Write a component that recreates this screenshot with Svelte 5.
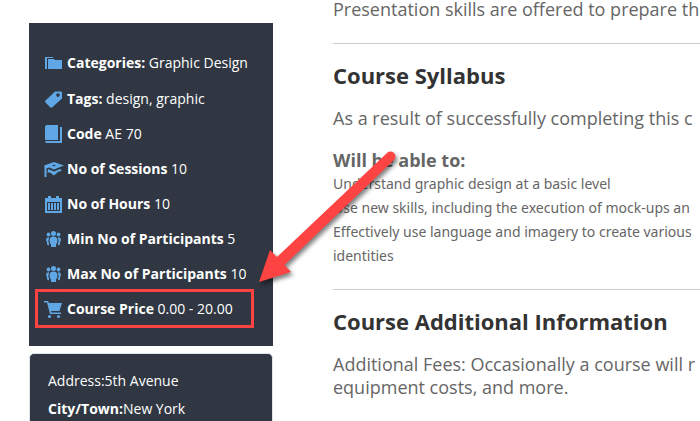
<script>
  const details = [
    { icon: 'folder', label: 'Categories:', value: 'Graphic Design' },
    { icon: 'tag', label: 'Tags:', value: 'design, graphic' },
    { icon: 'book', label: 'Code', value: 'AE 70' },
    { icon: 'cap', label: 'No of Sessions', value: '10' },
    { icon: 'calendar', label: 'No of Hours', value: '10' },
    { icon: 'people', label: 'Min No of Participants', value: '5' },
    { icon: 'people', label: 'Max No of Participants', value: '10' },
    { icon: 'cart', label: 'Course Price', value: '0.00 - 20.00', marked: true }
  ];
  const skills = [
    'Understand graphic design at a basic level',
    'Use new skills, including the execution of mock-ups an',
    'Effectively use language and imagery to create various',
    'identities'
  ];
</script>

{#snippet glyph(name)}
  <svg class="icon" viewBox="0 0 20 20" aria-hidden="true">
    {#if name === 'folder'}
      <path d="M1 4h8v1H3v11H1z M4 6h6l1 1h7v9H4z" />
    {:else if name === 'tag'}
      <path fill-rule="evenodd" d="M11 2.500h6q1 0 1 1v6L8 18.500Q7 19 6 18L1.500 13.500Q.5 12.500 1.500 11.500zM14 4.300a1.800 1.800 0 1 0 0 3.600 1.800 1.800 0 0 0 0-3.600z" />
    {:else if name === 'book'}
      <path d="M3 1h11v15H1V3q0-2 2-2z" />
      <path d="M16 3h2v16H3q-2 0-2-2h15z" />
    {:else if name === 'cap'}
      <path fill-rule="evenodd" d="M0 6.500 10 3l10 3.500-10 4-5-2-2.500 1V18H.5V8zM10 5.700l-2 .8 2 .8 2-.8z" />
      <path d="m4 10 6 2.600 6-2.600 2 1.500-4 1.500-4 3.500-4-3H3.500z" />
    {:else if name === 'calendar'}
      <path fill-rule="evenodd" d="M1 4h17v15H1zM3 8v9h13V8z" />
      <path d="M4 2h3v4H4zM12 2h3v4h-3zM4 9h2v7H4zM7 9h2v7H7zM10 9h2v7h-2zM13 9h2v7h-2z" />
    {:else if name === 'people'}
      <circle cx="9.500" cy="4.500" r="2.500" />
      <circle cx="4.500" cy="5.500" r="1.900" />
      <circle cx="14.500" cy="5.500" r="1.900" />
      <path d="M9.500 7.500q4 0 4 4 0 3-1.500 4v2.500H7v-2.500q-1.500-1-1.500-4 0-4 4-4zM5.200 8.500q-1.500 3-.2 6v2l-2-1v-2Q.5 9 4.500 8.300zM13.800 8.500q1.500 3 .2 6v2l2-1v-2q2.500-4.500-1.500-5.200z" />
    {:else}
      <path d="M0 2h4l1 2h13l-2.500 8H7l.4 1.500H17V15H6L3 3.500H0z" />
      <circle cx="5.500" cy="17.500" r="1.600" />
      <circle cx="14.500" cy="17.500" r="1.600" />
    {/if}
  </svg>
{/snippet}

<div class="page">
  <aside>
    <ul class="details">
      {#each details as item}
        <li class:marked={item.marked}>
          {@render glyph(item.icon)}
          <span><strong>{item.label}</strong> {item.value}</span>
        </li>
      {/each}
    </ul>
    <div class="address">
      <p><span>Address:</span><span>5th Avenue</span></p>
      <p><strong>City/Town:</strong><span>New York</span></p>
    </div>
  </aside>

  <main>
    <section>
      <p>Presentation skills are offered to prepare th</p>
    </section>
    <section>
      <h2>Course Syllabus</h2>
      <p>As a result of successfully completing this c</p>
      <h3>Will be able to:</h3>
      <div class="skills">
        {#each skills as skill}
          <div>{skill}</div>
        {/each}
      </div>
    </section>
    <section>
      <h2>Course Additional Information</h2>
      <p>Additional Fees: Occasionally a course will r<br />equipment costs, and more.</p>
    </section>
  </main>

  <svg class="arrow" viewBox="0 0 160 160" aria-hidden="true">
    <path d="M137 13a4.700 4.700 0 0 1 7 7L34.500 125l6.500 7L9 142 20 110l7 7z" />
  </svg>
</div>

<style>
  :global(body) {
    margin: 0;
    background: #fff;
  }
  .page {
    position: relative;
    display: flex;
    gap: 60px;
    height: 100vh;
    padding-left: 29px;
    box-sizing: border-box;
    overflow: hidden;
    font-family: 'Open Sans', 'Noto Sans', sans-serif;
    color: #666;
  }
  aside {
    flex: 0 0 244px;
    padding-top: 23px;
    font-size: 14px;
    line-height: 20px;
    color: #fff;
  }
  .details {
    margin: 0;
    padding: 22px 0 20px;
    list-style: none;
    background: #303742;
  }
  li {
    position: relative;
    display: flex;
    align-items: center;
    gap: 3px;
    height: 35px;
    padding-left: 15px;
    white-space: nowrap;
  }
  li:first-child {
    padding-bottom: 1px;
  }
  .marked::after {
    content: '';
    position: absolute;
    inset: -2px 19px -2px 6px;
    border: 3px solid #fe4343;
  }
  .icon {
    flex: none;
    width: 20px;
    height: 20px;
    fill: #5fa7e5;
  }
  .address {
    margin-top: 7px;
    padding: 17px 18px;
    border: 1px solid #dce4e8;
    border-radius: 5px;
    background: #303742;
  }
  main {
    flex: 1;
    min-width: 0;
    white-space: nowrap;
  }
  section:first-child {
    margin-top: -2px;
    padding-bottom: 22px;
  }
  section + section {
    padding: 19px 0 21px;
    border-top: 1px solid #ccc;
  }
  p {
    margin: 0;
    font-size: 18px;
    line-height: 23px;
  }
  .address p {
    display: flex;
    margin-bottom: 8px;
    font-size: 14px;
    line-height: 20px;
  }
  h2 {
    margin: 0 0 19px;
    font-size: 22px;
    line-height: 25px;
    font-weight: 700;
    color: #333;
  }
  h3 {
    margin: 18px 0 0;
    font-size: 18px;
    line-height: 24px;
    font-weight: 700;
  }
  .skills {
    font-family: 'Noto Sans', 'Open Sans', sans-serif;
    font-size: 14px;
    line-height: 24px;
  }
  .arrow {
    position: absolute;
    left: 250px;
    top: 140px;
    width: 160px;
    height: 160px;
    fill: #fe4343;
    filter: drop-shadow(2px 3px 2px rgba(0, 0, 0, 0.5));
  }
</style>
